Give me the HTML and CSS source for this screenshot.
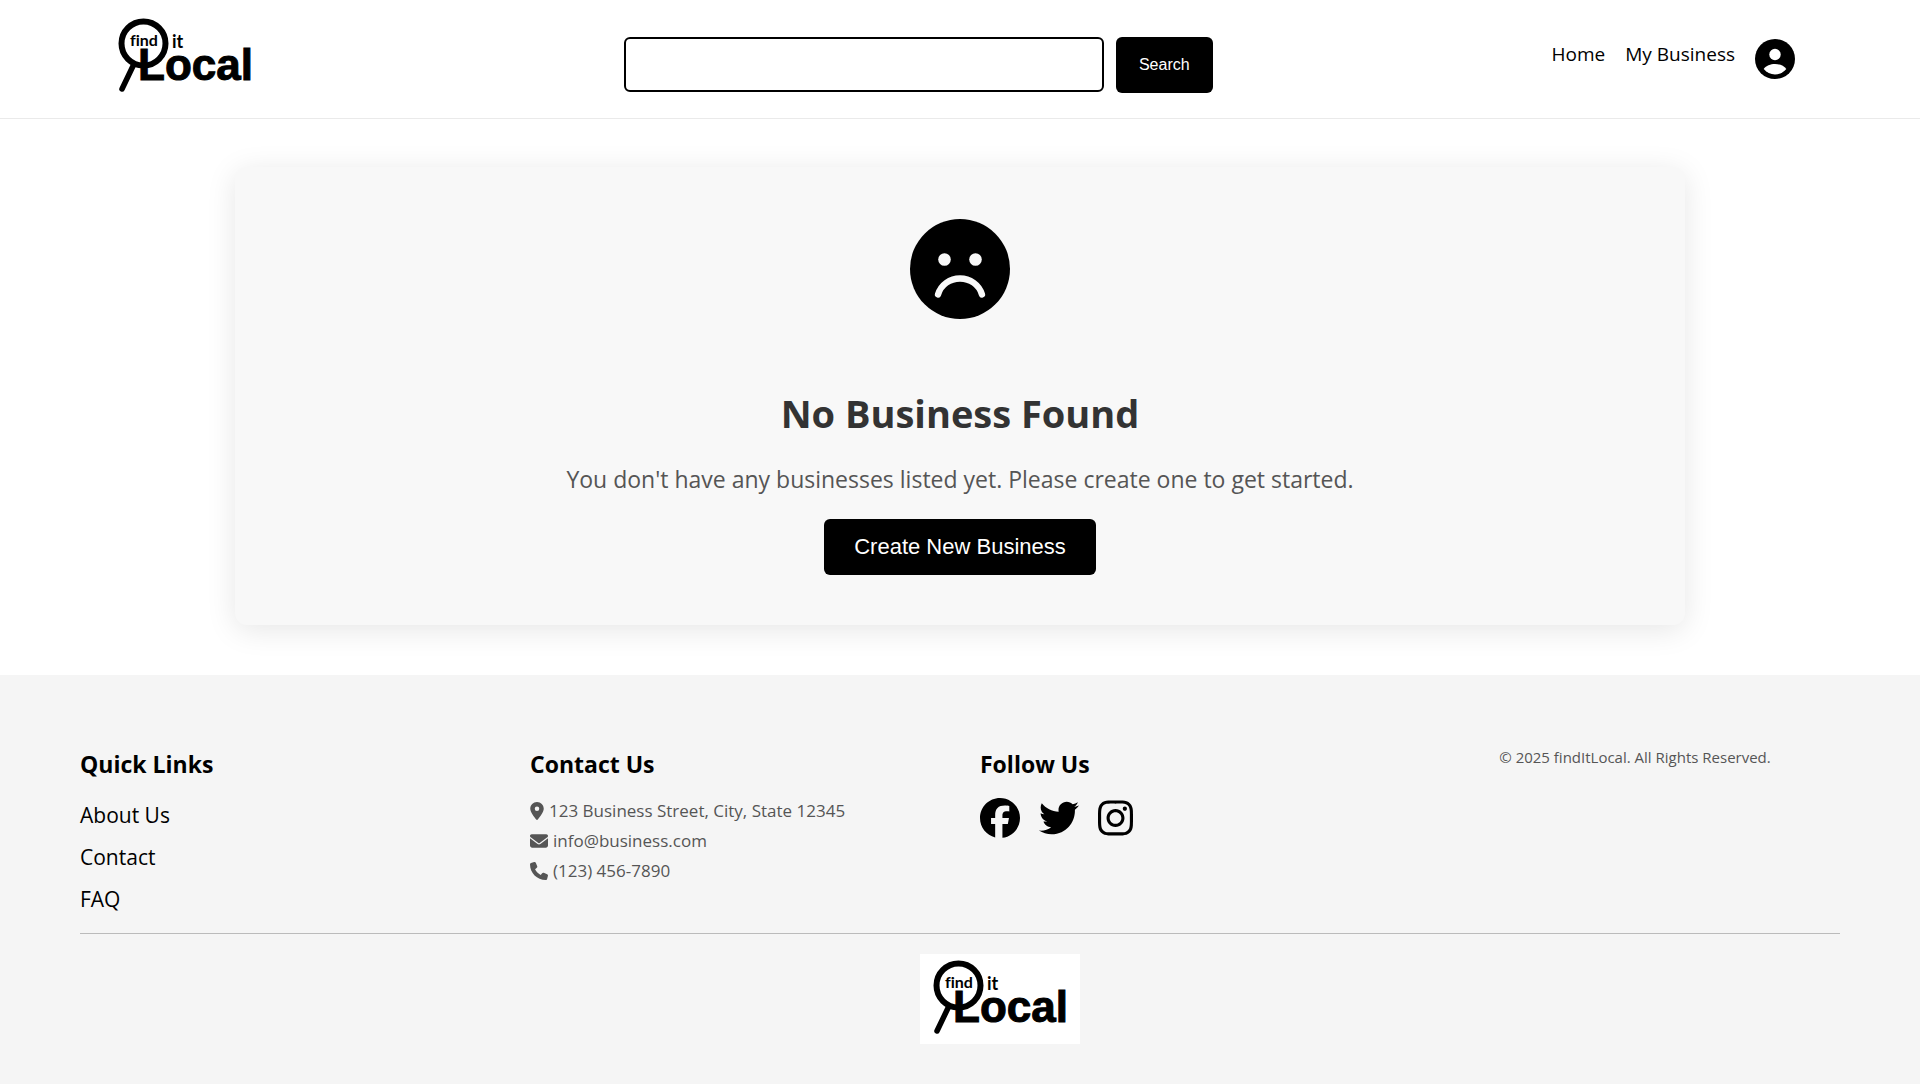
FILE: index.html
```html
<!DOCTYPE html>
<html lang="en">
<head>
<meta charset="utf-8">
<meta name="viewport" content="width=device-width, initial-scale=1">
<title>findItLocal - My Business</title>
<link rel="stylesheet" href="styles.css">
</head>
<body>
<svg class="sprite" aria-hidden="true">
  <symbol id="logo" viewBox="0 0 160 90">
    <circle cx="38.500" cy="31.500" r="22" fill="none" stroke="#000" stroke-width="6"/>
    <path d="M28.500 53 17 77" fill="none" stroke="#000" stroke-width="5.500" stroke-linecap="round"/>
    <text class="logo-small" x="25" y="34">find</text>
    <text class="logo-small logo-it" x="67" y="36">it</text>
    <text class="logo-big" x="33" y="68">Local</text>
  </symbol>
</svg>

<header class="header">
  <a class="header-logo" href="#" aria-label="findItLocal home"><svg class="logo"><use href="#logo"/></svg></a>
  <form class="search">
    <input class="search-input" type="text" aria-label="Search businesses">
    <button class="search-button" type="button">Search</button>
  </form>
  <nav class="nav">
    <a href="#">Home</a>
    <a href="#">My Business</a>
    <a class="profile" href="#" aria-label="Profile">
      <svg viewBox="0 0 40 40"><circle cx="20" cy="20" r="20"/><circle cx="20" cy="15.500" r="5.700" fill="#fff"/><path fill="#fff" d="M8.700 30C11 26.600 15.500 25 20 25s9 1.600 11.300 5C28.500 33.500 24.500 35.400 20 35.400S11.500 33.500 8.700 30z"/></svg>
    </a>
  </nav>
</header>

<main class="main">
  <section class="card">
    <svg class="sad" viewBox="0 0 100 100"><circle cx="50" cy="50" r="50"/><circle cx="34.500" cy="40.500" r="6.300" fill="#f8f8f8"/><circle cx="65.500" cy="40.500" r="6.300" fill="#f8f8f8"/><path d="M28 75.500C31 65.500 40 59.500 50 59.500S69 65.500 72 75.500" fill="none" stroke="#f8f8f8" stroke-width="6.300" stroke-linecap="round"/></svg>
    <h1>No Business Found</h1>
    <p>You don't have any businesses listed yet. Please create one to get started.</p>
    <button class="create" type="button">Create New Business</button>
  </section>
</main>

<footer class="footer">
  <div class="columns">
    <section class="column">
      <h2>Quick Links</h2>
      <ul class="links">
        <li><a href="#">About Us</a></li>
        <li><a href="#">Contact</a></li>
        <li><a href="#">FAQ</a></li>
      </ul>
    </section>
    <section class="column">
      <h2>Contact Us</h2>
      <ul class="contact">
        <li><svg class="pin" viewBox="0 0 384 512"><path d="M215.700 499.200C267 435 384 279.400 384 192C384 86 298 0 192 0S0 86 0 192c0 87.400 117 243 168.300 307.200c12.300 15.300 35.100 15.300 47.400 0zM192 128a64 64 0 1 1 0 128 64 64 0 1 1 0-128z"/></svg>123 Business Street, City, State 12345</li>
        <li><svg viewBox="0 0 512 512"><path d="M48 64C21.500 64 0 85.500 0 112c0 15.100 7.100 29.300 19.200 38.400L236.800 313.600c11.400 8.500 27 8.500 38.400 0L492.800 150.400c12.100-9.100 19.200-23.300 19.200-38.400c0-26.500-21.500-48-48-48L48 64zM0 176L0 384c0 35.300 28.700 64 64 64l384 0c35.300 0 64-28.700 64-64l0-208L294.400 339.200c-22.800 17.100-54 17.100-76.800 0L0 176z"/></svg>info@business.com</li>
        <li><svg viewBox="0 0 512 512"><path d="M164.900 24.600c-7.700-18.600-28-28.500-47.400-23.200l-88 24C12.100 30.200 0 46 0 64C0 311.400 200.600 512 448 512c18 0 33.800-12.100 38.600-29.500l24-88c5.300-19.400-4.600-39.700-23.200-47.400l-96-40c-16.300-6.800-35.200-2.100-46.300 11.600L304.700 368C234.300 334.700 177.300 277.700 144 207.300L193.300 167c13.700-11.200 18.400-30 11.600-46.300l-40-96z"/></svg>(123) 456-7890</li>
      </ul>
    </section>
    <section class="column">
      <h2>Follow Us</h2>
      <div class="social">
        <a href="#" aria-label="Facebook"><svg viewBox="0 0 512 512"><path d="M512 256C512 114.600 397.400 0 256 0S0 114.600 0 256C0 376 82.700 476.800 194.200 504.500V334.200H141.400V256h52.800V222.300c0-87.100 39.400-127.500 125-127.500c16.200 0 44.200 3.200 55.700 6.400V172c-6-.6-16.500-1-29.600-1c-42 0-58.200 15.900-58.200 57.200V256h83.600l-14.400 78.200H287V510.100C413.800 494.800 512 386.900 512 256z"/></svg></a>
        <a href="#" aria-label="Twitter"><svg viewBox="0 0 512 512"><path d="M459.370 151.716c.325 4.548.325 9.097.325 13.645 0 138.720-105.583 298.558-298.558 298.558-59.452 0-114.680-17.219-161.137-47.106 8.447.974 16.568 1.299 25.340 1.299 49.055 0 94.213-16.568 130.274-44.832-46.132-.975-84.792-31.188-98.112-72.772 6.498.974 12.995 1.624 19.818 1.624 9.421 0 18.843-1.300 27.614-3.573-48.081-9.747-84.143-51.980-84.143-102.985v-1.299c13.969 7.797 30.214 12.670 47.431 13.319-28.264-18.843-46.781-51.005-46.781-87.391 0-19.492 5.197-37.360 14.294-52.954 51.655 63.675 129.300 105.258 216.365 109.807-1.624-7.797-2.599-15.918-2.599-24.040 0-57.828 46.782-104.934 104.934-104.934 30.213 0 57.502 12.670 76.670 33.137 23.715-4.548 46.456-13.320 66.599-25.340-7.798 24.366-24.366 44.833-46.132 57.827 21.117-2.273 41.584-8.122 60.426-16.243-14.292 20.791-32.161 39.308-52.628 54.253z"/></svg></a>
        <a href="#" aria-label="Instagram"><svg class="insta" viewBox="0 0 448 512"><path d="M224.100 141c-63.600 0-114.900 51.300-114.900 114.900s51.300 114.900 114.900 114.900S339 319.500 339 255.900 287.700 141 224.100 141zm0 189.600c-41.100 0-74.700-33.500-74.700-74.700s33.500-74.700 74.700-74.700 74.700 33.500 74.700 74.700-33.600 74.700-74.700 74.700zm146.400-194.300c0 14.900-12 26.800-26.800 26.800-14.900 0-26.800-12-26.800-26.800s12-26.800 26.800-26.800 26.800 12 26.800 26.800zm76.100 27.200c-1.700-35.900-9.900-67.700-36.200-93.900-26.200-26.200-58-34.400-93.900-36.200-37-2.100-147.900-2.100-184.900 0-35.800 1.700-67.600 9.900-93.900 36.100s-34.400 58-36.200 93.900c-2.100 37-2.100 147.900 0 184.900 1.700 35.900 9.900 67.700 36.200 93.900s58 34.400 93.900 36.200c37 2.100 147.900 2.100 184.900 0 35.900-1.700 67.700-9.900 93.900-36.200 26.200-26.200 34.400-58 36.200-93.900 2.100-37 2.100-147.800 0-184.800zM398.800 388c-7.800 19.600-22.900 34.700-42.600 42.600-29.500 11.700-99.500 9-132.100 9s-102.700 2.600-132.100-9c-19.600-7.800-34.700-22.900-42.600-42.600-11.700-29.500-9-99.500-9-132.100s-2.600-102.700 9-132.100c7.800-19.600 22.900-34.700 42.600-42.600 29.500-11.700 99.500-9 132.100-9s102.700-2.600 132.100 9c19.600 7.800 34.700 22.900 42.600 42.600 11.700 29.500 9 99.500 9 132.100s2.700 102.700-9 132.100z"/></svg></a>
      </div>
    </section>
    <p class="copyright">© 2025 findItLocal. All Rights Reserved.</p>
  </div>
  <div class="footer-bottom">
    <svg class="logo"><use href="#logo"/></svg>
  </div>
</footer>
</body>
</html>
```
FILE: styles.css
```css
* {
  box-sizing: border-box;
}

body {
  margin: 0;
  background: #fff;
  color: #000;
  font-family: "Segoe UI", "Open Sans", "Noto Sans", sans-serif;
}

a {
  color: inherit;
  text-decoration: none;
}

ul {
  margin: 0;
  padding: 0;
  list-style: none;
}

.sprite {
  position: absolute;
  width: 0;
  height: 0;
}

.logo {
  display: block;
  width: 160px;
  height: 90px;
  background: #fff;
}

.logo-small {
  font: bold 16px Lato, sans-serif;
  font-variant-ligatures: none;
}

.logo-it {
  font-size: 18px;
}

.logo-big {
  font: bold 44px "Liberation Sans", Arial, sans-serif;
  stroke: #000;
  stroke-width: 1px;
}

.header {
  display: flex;
  justify-content: space-between;
  align-items: flex-start;
  padding: 12px 125px 16px 105px;
  border-bottom: 1px solid #eaeaea;
}

.header-logo {
  margin-right: 20px;
}

.search {
  display: flex;
  gap: 12px;
  padding-top: 25px;
}

.search-input {
  width: 480px;
  height: 55px;
  padding: 0 16px;
  border: 2px solid #000;
  border-radius: 6px;
  font-size: 16px;
}

.search-button,
.create {
  height: 56px;
  border: 0;
  border-radius: 6px;
  background: #000;
  color: #fff;
  font-family: "Liberation Sans", Arial, sans-serif;
}

.search-button {
  width: 97px;
  font-size: 16px;
}

.nav {
  display: flex;
  gap: 20px;
  padding-top: 27px;
  font-size: 19px;
  line-height: 30px;
}

.profile svg {
  display: block;
  width: 40px;
  height: 40px;
}

.main {
  padding: 48px 235px 50px;
}

.card {
  display: flex;
  flex-direction: column;
  align-items: center;
  padding: 52px 20px 50px;
  border-radius: 12px;
  background: #f8f8f8;
  box-shadow: 0 5px 30px rgba(0, 0, 0, 0.1);
}

.sad {
  width: 100px;
  height: 100px;
}

.card h1 {
  margin: 66px 0 0;
  color: #333;
  font-size: 38px;
  line-height: 56px;
}

.card p {
  margin: 21px 0 23px;
  color: #555;
  font-size: 23px;
  line-height: 34px;
}

.create {
  width: 272px;
  font-size: 22px;
}

.footer {
  padding: 70px 80px 40px;
  background: #f5f5f5;
}

.columns {
  display: grid;
  grid-template-columns: repeat(4, 1fr);
  column-gap: 40px;
  padding-bottom: 19px;
  border-bottom: 1px solid #bbb;
}

.column h2 {
  margin: 0 0 13px;
  font-size: 23px;
  line-height: 38px;
}

.links {
  display: grid;
  gap: 12px;
  padding-top: 4px;
  font-size: 21px;
  line-height: 30px;
}

.contact {
  color: #555;
  font-size: 17px;
  line-height: 30px;
}

.contact li {
  display: flex;
  align-items: center;
  gap: 5px;
}

.contact svg {
  width: 18px;
  height: 18px;
  fill: #555;
}

.contact .pin {
  width: 14px;
}

.social {
  display: flex;
  gap: 19px;
  padding-top: 2px;
}

.social svg {
  display: block;
  width: 40px;
  height: 40px;
}

.social .insta {
  width: 35px;
}

.copyright {
  margin: 0;
  color: #555;
  font-size: 15px;
  line-height: 24px;
  text-align: center;
}

.footer-bottom {
  display: flex;
  justify-content: center;
  padding: 20px 0 0 80px;
}
```
